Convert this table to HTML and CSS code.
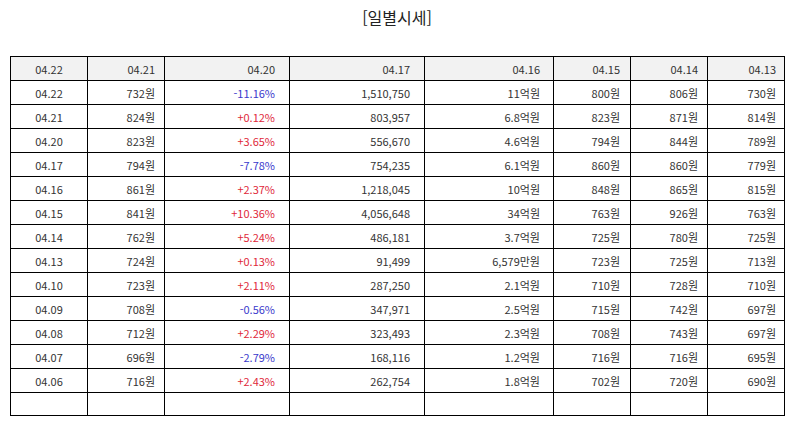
FILE: index.html
```html
<!DOCTYPE html>
<html lang="ko">
<head>
<meta charset="utf-8">
<link rel="stylesheet" href="styles.css">
</head>
<body>
<h1 class="title">[일별시세]</h1>
<table class="grid">
<colgroup>
<col class="c1"><col class="c2"><col class="c3"><col class="c4"><col class="c5"><col class="c6"><col class="c7"><col class="c8">
</colgroup>
<thead>
<tr><th class="d">04.22</th><th class="p2">04.21</th><th class="p3">04.20</th><th class="p4">04.17</th><th class="p5">04.16</th><th class="p6">04.15</th><th class="p7">04.14</th><th class="p8">04.13</th></tr>
</thead>
<tbody>
<tr><td class="d">04.22</td><td class="p2">732원</td><td class="p3 dn">-11.16%</td><td class="p4">1,510,750</td><td class="p5">11억원</td><td class="p6">800원</td><td class="p7">806원</td><td class="p8">730원</td></tr>
<tr><td class="d">04.21</td><td class="p2">824원</td><td class="p3 up">+0.12%</td><td class="p4">803,957</td><td class="p5">6.8억원</td><td class="p6">823원</td><td class="p7">871원</td><td class="p8">814원</td></tr>
<tr><td class="d">04.20</td><td class="p2">823원</td><td class="p3 up">+3.65%</td><td class="p4">556,670</td><td class="p5">4.6억원</td><td class="p6">794원</td><td class="p7">844원</td><td class="p8">789원</td></tr>
<tr><td class="d">04.17</td><td class="p2">794원</td><td class="p3 dn">-7.78%</td><td class="p4">754,235</td><td class="p5">6.1억원</td><td class="p6">860원</td><td class="p7">860원</td><td class="p8">779원</td></tr>
<tr><td class="d">04.16</td><td class="p2">861원</td><td class="p3 up">+2.37%</td><td class="p4">1,218,045</td><td class="p5">10억원</td><td class="p6">848원</td><td class="p7">865원</td><td class="p8">815원</td></tr>
<tr><td class="d">04.15</td><td class="p2">841원</td><td class="p3 up">+10.36%</td><td class="p4">4,056,648</td><td class="p5">34억원</td><td class="p6">763원</td><td class="p7">926원</td><td class="p8">763원</td></tr>
<tr><td class="d">04.14</td><td class="p2">762원</td><td class="p3 up">+5.24%</td><td class="p4">486,181</td><td class="p5">3.7억원</td><td class="p6">725원</td><td class="p7">780원</td><td class="p8">725원</td></tr>
<tr><td class="d">04.13</td><td class="p2">724원</td><td class="p3 up">+0.13%</td><td class="p4">91,499</td><td class="p5">6,579만원</td><td class="p6">723원</td><td class="p7">725원</td><td class="p8">713원</td></tr>
<tr><td class="d">04.10</td><td class="p2">723원</td><td class="p3 up">+2.11%</td><td class="p4">287,250</td><td class="p5">2.1억원</td><td class="p6">710원</td><td class="p7">728원</td><td class="p8">710원</td></tr>
<tr><td class="d">04.09</td><td class="p2">708원</td><td class="p3 dn">-0.56%</td><td class="p4">347,971</td><td class="p5">2.5억원</td><td class="p6">715원</td><td class="p7">742원</td><td class="p8">697원</td></tr>
<tr><td class="d">04.08</td><td class="p2">712원</td><td class="p3 up">+2.29%</td><td class="p4">323,493</td><td class="p5">2.3억원</td><td class="p6">708원</td><td class="p7">743원</td><td class="p8">697원</td></tr>
<tr><td class="d">04.07</td><td class="p2">696원</td><td class="p3 dn">-2.79%</td><td class="p4">168,116</td><td class="p5">1.2억원</td><td class="p6">716원</td><td class="p7">716원</td><td class="p8">695원</td></tr>
<tr><td class="d">04.06</td><td class="p2">716원</td><td class="p3 up">+2.43%</td><td class="p4">262,754</td><td class="p5">1.8억원</td><td class="p6">702원</td><td class="p7">720원</td><td class="p8">690원</td></tr>
<tr class="blank"><td></td><td></td><td></td><td></td><td></td><td></td><td></td><td></td></tr>
</tbody>
</table>
</body>
</html>
```
FILE: styles.css
```css
html, body {
  margin: 0;
  padding: 0;
  background: #ffffff;
}
body {
  padding: 0 10px;
  font-family: "Noto Sans CJK KR", "Noto Sans", sans-serif;
  color: #333333;
}
.title {
  margin: 0;
  height: 56px;
  padding-top: 6px;
  box-sizing: border-box;
  text-align: center;
  font-size: 16px;
  font-weight: normal;
  line-height: 22px;
  color: #222222;
}
.grid {
  width: 774px;
  border-collapse: collapse;
  table-layout: fixed;
  font-size: 11px;
}
.c1 { width: 77px; }
.c2 { width: 77px; }
.c3 { width: 125px; }
.c4 { width: 135px; }
.c5 { width: 129px; }
.c6 { width: 77px; }
.c7 { width: 77px; }
.c8 { width: 77px; }
.grid th, .grid td {
  border: 1px solid #000000;
  height: 23px;
  padding: 0;
  line-height: 14px;
  font-weight: normal;
  text-align: right;
  vertical-align: middle;
  white-space: nowrap;
}
.grid th {
  background: #f2f2f2;
}
.grid .d { text-align: center; }
.p2 { padding-right: 9px !important; }
.p3 { padding-right: 14px !important; }
.p4 { padding-right: 14px !important; }
.p5 { padding-right: 13px !important; }
.p6 { padding-right: 10px !important; }
.p7 { padding-right: 9px !important; }
.p8 { padding-right: 8px !important; }
.up { color: #e0283a; }
.dn { color: #3a3acc; }
.grid .blank td { height: 22px; }
```
